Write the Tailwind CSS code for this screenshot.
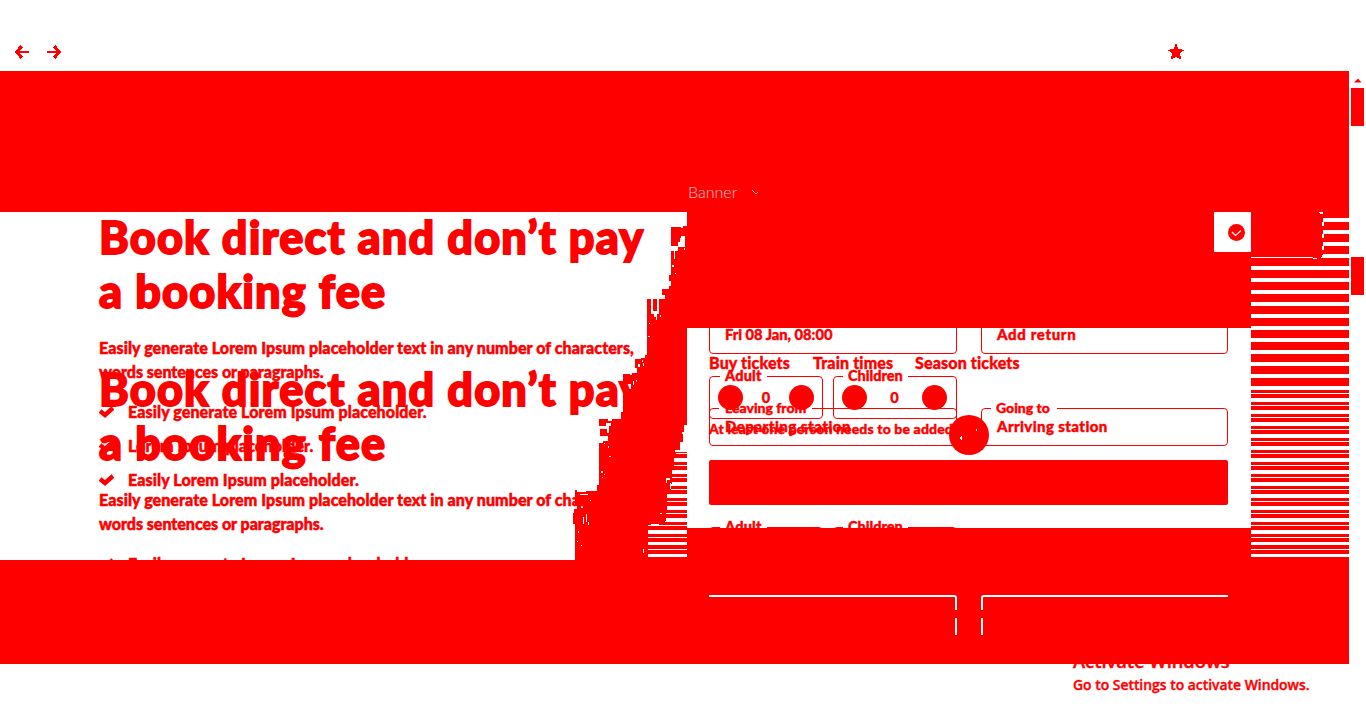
<!DOCTYPE html>
<html lang="en">
<head>
<meta charset="utf-8">
<title>Book direct</title>
<script src="https://cdn.jsdelivr.net/npm/@tailwindcss/browser@4"></script>
</head>
<body class="bg-white text-[#f00] font-['Lato',sans-serif] font-black overflow-hidden">
<div class="flex flex-col w-[1366px] h-[728px] overflow-hidden">
  <header class="h-[71px] flex items-start pt-[44px] pl-[14px] shrink-0">
    <svg class="w-4 h-4" viewBox="0 0 16 16" fill="none" stroke="#f00" shape-rendering="crispEdges"><path d="M3 8h12" stroke-width="2"/><path d="M8 2.200L2.700 8L8 13.800" stroke-width="3.400"/></svg>
    <svg class="w-4 h-4 ml-4" viewBox="0 0 16 16" fill="none" stroke="#f00" shape-rendering="crispEdges"><path d="M1 8h12" stroke-width="2"/><path d="M8 2.200L13.300 8L8 13.800" stroke-width="3.400"/></svg>
    <svg class="w-4 h-4 ml-[1106px]" viewBox="0 0 16 16" fill="#f00" shape-rendering="crispEdges"><path d="M7 0h2v3h1v2h4v1h2v1h-2v1h-1v1h-1v3h1v3h-2v-1h-2v-1H7v1H5v1H3v-3h1V9H3V8H2V7H0V6h2V5h4V3h1z"/></svg>
  </header>

  <div class="flex h-[593px] shrink-0">
    <main class="w-[1349px] flex flex-col shrink-0">
      <div class="h-[141px] bg-[#f00] pl-[688px] pt-[111px] text-white text-base leading-[20px] font-light flex items-start shrink-0">
        <span class="opacity-75">Banner</span>
        <svg class="w-2 h-2 ml-[14px] mt-[7px]" viewBox="0 0 8 8" fill="none" stroke="#fff" stroke-width=".7"><path d="M1 1l4 4 2-2"/></svg>
      </div>

      <div class="h-[348px] flex relative shrink-0">
        <section class="w-[687px] h-[348px] relative overflow-hidden shrink-0">
          <svg class="absolute left-[560px] top-0 w-[127px] h-[348px]" viewBox="560 212 127 348" shape-rendering="crispEdges">
            <defs><pattern id="bars" width="127" height="12" x="560" y="458" patternUnits="userSpaceOnUse"><rect x="0" y="4" width="127" height="3" fill="#f00"/><rect x="0" y="8" width="127" height="4" fill="#f00"/></pattern></defs>
            <rect x="640" y="452" width="47" height="90" fill="url(#bars)"/>
            <path fill="#f00" d="M640 545h47v4h-47zM640 550h47v4h-47zM640 557h47v3h-47z"/>
            <path fill="#f00" d="M687 226H683V228H681V227H671V246H678V242H680V238H683V236H685V247H678V251H671V275H669V281H671V286H669V289H662V295H665V299H647V355H645V358H641V359H635V368H637V373H632V375H630V374H623V384H631V389H627V379H623V412H621V419H612V421H608V419H599V426H606V429H600V436H608V441H603V443H599V485H597V491H586V492H577V490H575V506H577V509H574V513H573V524H575V560H648V523H650V524H665V521H666V513H667V493H671V484H672V466H674V457H676V453H675V450H680V442H683V434H682V432H684V425H687Z"/>
            <path fill="#fff" d="M651 299h2v12h4v-12h2v15h-8zM654 314h3v6h-1v-3h-2zM660 315h1v2h-1zM649 323h1v1h-1zM648 336h2v1h-2zM674 251h1v8h-1zM672 265h2v2h-2zM675 273h1v1h-1zM684 241h1v1h-1zM684 248h1v2h-1zM681 236h2v4h-2zM642 360h1v2h-1zM638 364h2v3h-2zM643 363h1v3h-1zM633 381h1v4h-1zM636 380h1v3h-1zM638 383h1v2h-1zM606 423h5v3h-2v7h-2v-4h-1zM604 443h1v1h-1zM608 446h1v2h-1zM609 456h2v1h-2zM601 471h2v2h-2zM604 474h1v1h-1zM602 477h1v1h-1zM580 494h8v1h-8zM590 500h1v2h-1zM581 505h2v3h-2zM586 514h1v8h-1zM583 517h1v7h-1zM588 522h1v3h-1zM577 541h1v1h-1zM581 545h1v1h-1zM578 531h1v2h-1zM685 429h1v3h-1zM685 438h1v3h-1zM679 451h3v1h-3zM666 478h4v2h-3v3h-1zM670 483h1v6h-1zM660 513h2v1h-2zM651 524h8v1h-8zM643 549h1v4h-1z"/>
          </svg>

          <article class="absolute left-[99px] top-[-2px] w-[570px]">
            <h1 class="text-[45px] leading-[54px] tracking-[1.2px] [-webkit-text-stroke:1.8px_#f00]">Book direct and don’t pay<br>a booking fee</h1>
            <p class="mt-[18px] text-base leading-6 tracking-[.08px] whitespace-nowrap [-webkit-text-stroke:.5px_#f00]">Easily generate Lorem Ipsum placeholder text in any number of characters,<br><span class="tracking-[-.02px]">words sentences or paragraphs.</span></p>
            <ul class="mt-4 flex flex-col gap-[10px] text-base leading-6 tracking-[.1px] [-webkit-text-stroke:.5px_#f00]">
              <li class="flex items-center gap-[14px]"><svg class="w-[15px] h-3" viewBox="0 0 15 12" fill="none" stroke="#f00" stroke-width="4.500"><path d="M1 5l5 4 8-7"/></svg>Easily generate Lorem Ipsum placeholder.</li>
              <li class="flex items-center gap-[14px]"><svg class="w-[15px] h-3" viewBox="0 0 15 12" fill="none" stroke="#f00" stroke-width="4.500"><path d="M1 5l5 4 8-7"/></svg>Lorem Ipsum placeholder.</li>
              <li class="flex items-center gap-[14px]"><svg class="w-[15px] h-3" viewBox="0 0 15 12" fill="none" stroke="#f00" stroke-width="4.500"><path d="M1 5l5 4 8-7"/></svg>Easily Lorem Ipsum placeholder.</li>
            </ul>
          </article>
          <article class="absolute left-[99px] top-[150px] w-[570px]">
            <h2 class="text-[45px] leading-[54px] tracking-[1.2px] [-webkit-text-stroke:1.8px_#f00]">Book direct and don’t pay<br>a booking fee</h2>
            <p class="mt-[18px] text-base leading-6 tracking-[.08px] whitespace-nowrap [-webkit-text-stroke:.5px_#f00]">Easily generate Lorem Ipsum placeholder text in any number of characters,<br><span class="tracking-[-.02px]">words sentences or paragraphs.</span></p>
            <div class="mt-4 flex items-center gap-[14px] text-base leading-6 tracking-[.1px] [-webkit-text-stroke:.5px_#f00]"><svg class="w-[15px] h-3" viewBox="0 0 15 12" fill="none" stroke="#f00" stroke-width="4.500"><path d="M1 5l5 4 8-7"/></svg>Easily generate Lorem Ipsum placeholder.</div>
          </article>
        </section>

        <section class="w-[564px] flex flex-col shrink-0">
          <div class="h-[116px] bg-[#f00] flex justify-end shrink-0">
            <div class="w-[37px] h-10 bg-white flex items-center justify-center pl-[8px]">
              <svg class="w-[17px] h-[17px]" viewBox="0 0 17 17"><circle cx="8.500" cy="8.500" r="8.500" fill="#f00"/><path d="M4 8l3.500 3.500L13 6.500" fill="none" stroke="#fff" stroke-width="1.200"/></svg>
            </div>
          </div>
          <div class="h-[200px] relative overflow-hidden shrink-0">
            <form class="absolute left-[22px] top-[-20px] w-[519px] [-webkit-text-stroke:.4px_#f00]">
              <div class="flex justify-between text-[14.700px] leading-[18px]">
                <div class="w-[248px] h-[46px] border border-[#f00] rounded pl-[15px] pt-[16px]">Fri 08 Jan, 08:00</div>
                <div class="w-[247px] h-[46px] border border-[#f00] rounded pl-[15px] pt-[16px] text-[15px] tracking-[.65px]">Add return</div>
              </div>
              <div class="flex gap-[10px] mt-[14px] text-[14.500px] leading-[17px]">
                <fieldset class="w-[114px] h-[51px] border border-[#f00] rounded pl-2 pr-2 min-w-0">
                  <legend class="ml-[2px] px-[5px]"><span class="relative -top-px tracking-[.2px]">Adult</span></legend>
                  <div class="flex items-center justify-between h-[25px]"><i class="w-[25px] h-[25px] rounded-full bg-[#f00]"></i><span>0</span><i class="w-[25px] h-[25px] rounded-full bg-[#f00]"></i></div>
                </fieldset>
                <fieldset class="w-[124px] h-[51px] border border-[#f00] rounded pl-2 pr-[9px] min-w-0">
                  <legend class="ml-[1px] px-[5px]"><span class="relative -top-px">Children</span></legend>
                  <div class="flex items-center justify-between h-[25px]"><i class="w-[25px] h-[25px] rounded-full bg-[#f00]"></i><span>0</span><i class="w-[25px] h-[25px] rounded-full bg-[#f00]"></i></div>
                </fieldset>
              </div>
              <p class="mt-px text-sm leading-[17px] tracking-[.14px]">At least one person needs to be added</p>
            </form>
            <form class="absolute left-[22px] top-[25px] w-[519px] [-webkit-text-stroke:.4px_#f00]">
              <nav class="flex text-base leading-5 tracking-[.15px] whitespace-nowrap"><span class="w-[104px]">Buy tickets</span><span class="w-[102px]">Train times</span><span>Season tickets</span></nav>
              <div class="flex justify-between mt-[27px] text-[15px] leading-[18px] tracking-[.4px]">
                <fieldset class="w-[248px] h-[46px] border border-[#f00] rounded pl-[15px] min-w-0"><legend class="-ml-[6px] px-1.5 text-sm leading-[17px] tracking-normal"><span class="relative -top-px">Leaving from</span></legend><span class="tracking-[.5px]">Departing station</span></fieldset>
                <fieldset class="w-[247px] h-[46px] border border-[#f00] rounded pl-[15px] min-w-0"><legend class="-ml-[6px] px-1.5 text-sm leading-[17px] tracking-normal"><span class="relative -top-px -left-px">Going to</span></legend>Arriving station</fieldset>
              </div>
              <div class="mt-[14px] h-[45px] bg-[#f00] rounded-[2px]"></div>
              <div class="flex gap-[10px] mt-[14px] text-[14.500px] leading-[17px]">
                <fieldset class="w-[114px] h-[51px] border border-[#f00] rounded pl-2 min-w-0"><legend class="ml-[2px] px-[5px]"><span class="relative -top-px tracking-[.2px]">Adult</span></legend></fieldset>
                <fieldset class="w-[124px] h-[51px] border border-[#f00] rounded pl-2 min-w-0"><legend class="ml-[1px] px-[5px]"><span class="relative -top-px">Children</span></legend></fieldset>
              </div>
            </form>
            <svg class="absolute left-[262px] top-[87px] w-10 h-10" viewBox="0 0 40 40"><circle cx="20" cy="20" r="20" fill="#f00"/><path d="M11 22h1v-1h1v4h-1v-1h-1zM27 14h1v2h-1z" fill="#fff"/></svg>
          </div>
          <div class="grow bg-[#f00]"></div>
        </section>

        <aside class="w-[98px] h-[348px] shrink-0">
          <svg class="w-[98px] h-[348px]" viewBox="1251 212 98 348" shape-rendering="crispEdges">
            <defs>
              <pattern id="wide" width="98" height="12" x="1251" y="218" patternUnits="userSpaceOnUse"><rect y="4" width="98" height="8" fill="#f00"/></pattern>
              <pattern id="fine" width="98" height="12" x="1251" y="386" patternUnits="userSpaceOnUse"><rect y="4" width="98" height="3" fill="#f00"/><rect y="8" width="98" height="4" fill="#f00"/></pattern>
            </defs>
            <rect x="1251" y="212" width="98" height="174" fill="url(#wide)"/>
            <rect x="1251" y="386" width="98" height="156" fill="url(#fine)"/>
            <path fill="#f00" d="M1251 212h72v42l-2 4h-70zM1251 545h98v4h-98zM1251 550h98v4h-98zM1251 557h98v3h-98z"/>
            <path fill="#fff" d="M1319 212h4v2h-3v-1h-1zM1322 222h2v4h-2zM1322 234h2v4h-2zM1322 246h2v4h-2zM1251 257h62v1h4v1h-4v-1h-62z"/>
          </svg>
        </aside>
      </div>

      <div class="h-[104px] bg-[#f00] pl-[709px] pt-[35px] flex gap-[24px] shrink-0">
        <div class="w-[248px] h-10 border-t-2 border-r-2 border-white rounded-tr-[3px] flex flex-col items-end"><i class="w-[3px] h-2 -mr-[2px] mt-[13px] bg-[#f00] shrink-0"></i></div>
        <div class="w-[247px] h-10 border-t-2 border-l-2 border-white rounded-tl-[3px] flex flex-col items-start"><i class="w-[3px] h-2 -ml-[2px] mt-[13px] bg-[#f00] shrink-0"></i></div>
      </div>
    </main>

    <aside class="w-[17px] pl-[2px] pt-[7px] flex flex-col shrink-0">
      <svg class="w-[13px] h-[5px] shrink-0" viewBox="0 0 13 5" fill="#f00"><path d="M3 4.500h7.500L7 .5z"/></svg>
      <div class="mt-[5px] w-[13px] h-[38px] bg-[#f00] shrink-0"></div>
      <div class="mt-[131px] w-[13px] h-[38px] bg-[#f00] shrink-0"></div>
    </aside>
  </div>

  <footer class="pl-[1073px] -mt-[15px] font-['Open_Sans',sans-serif] font-semibold whitespace-nowrap [-webkit-text-stroke:.4px_#f00]">
    <p class="text-[18.300px] leading-6">Activate Windows</p>
    <p class="text-[13.900px] leading-5 mt-[2px]">Go to Settings to activate Windows.</p>
  </footer>
</div>
</body>
</html>
